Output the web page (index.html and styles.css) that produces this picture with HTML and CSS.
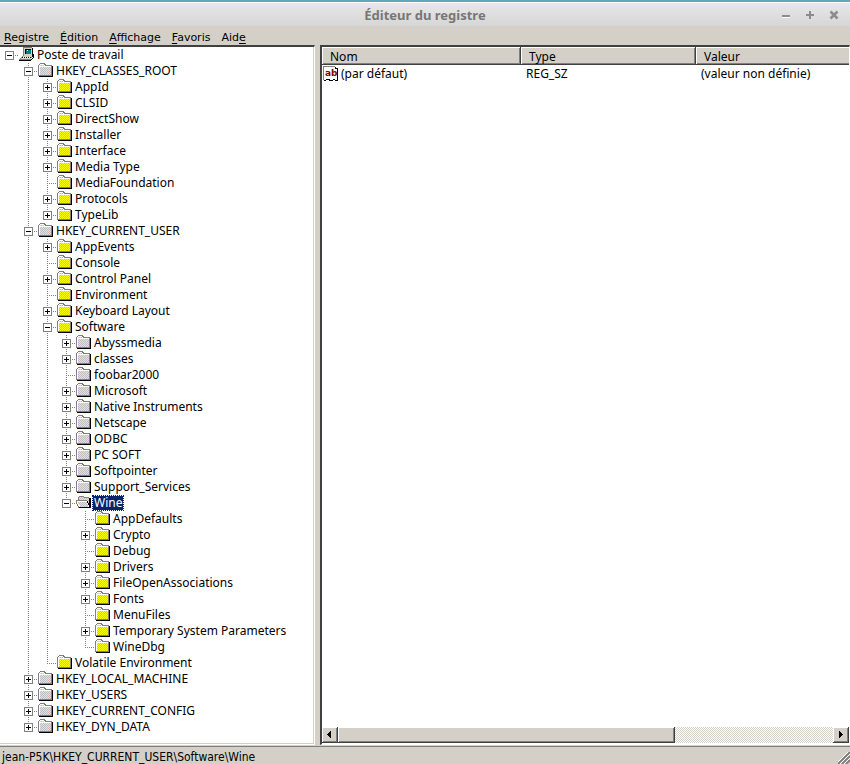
FILE: index.html
```html
<!DOCTYPE html>
<html lang="fr">
<head>
<meta charset="utf-8">
<title>Éditeur du registre</title>
<link rel="stylesheet" href="styles.css">
</head>
<body>
<header class="titlebar">
  <h1>Éditeur du registre</h1>
  <div class="controls">
    <button type="button" aria-label="Réduire"><svg width="10" height="10"><path d="M1 7h8v1H1z" fill="#fff"/><path d="M1 5h8v2H1z" fill="#8c8c8c"/></svg></button>
    <button type="button" aria-label="Agrandir"><svg width="10" height="10"><path d="M4 1h2v3h3v2H6v3H4V6H1V4h3z" fill="#8c8c8c"/></svg></button>
    <button type="button" aria-label="Fermer"><svg width="10" height="10"><path d="M1.5 1.5l7 7M8.5 1.5l-7 7" stroke="#8c8c8c" stroke-width="2.5"/></svg></button>
  </div>
</header>
<nav class="menubar">
  <button type="button"><u>R</u>egistre</button>
  <button type="button"><u>É</u>dition</button>
  <button type="button"><u>A</u>ffichage</button>
  <button type="button"><u>F</u>avoris</button>
  <button type="button">Aid<u>e</u></button>
</nav>
<main class="panes">
  <section class="tree-pane"><ul class="tree" id="tree"></ul></section>
  <section class="list-pane">
    <table class="values">
      <colgroup><col class="col-name"><col class="col-type"><col class="col-value"></colgroup>
      <thead><tr><th>Nom</th><th>Type</th><th>Valeur</th></tr></thead>
      <tbody><tr>
        <td><span class="entry"><svg width="16" height="16" shape-rendering="crispEdges"><path d="M1 1h12v1h1v12h-2v-1h-2v1H7v-1H3v1H1z" fill="#fff"/><path d="M0 0h12v1H1v13H0z" fill="#808080"/><path d="M12 1h1v1h2v13h-3v-1h2V3h-2zM1 14h2v-1h4v1h3v-1h2v1h-2v1H6v-1H3v1H1z" fill="#000"/><text x="2" y="10" class="ab">ab</text></svg><span>(par défaut)</span></span></td>
        <td>REG_SZ</td><td>(valeur non définie)</td>
      </tr></tbody>
    </table>
    <div class="scrollbar">
      <button type="button" aria-label="Défiler à gauche"><svg width="8" height="8" shape-rendering="crispEdges"><path d="M5 0v7H4V6H3V5H2V4H1V3h1V2h1V1h1V0z"/></svg></button>
      <div class="track"><div class="thumb"></div></div>
      <button type="button" aria-label="Défiler à droite"><svg width="8" height="8" shape-rendering="crispEdges"><path d="M2 0v7h1V6h1V5h1V4h1V3H5V2H4V1H3V0z"/></svg></button>
    </div>
  </section>
</main>
<footer class="status"><span>jean-P5K\HKEY_CURRENT_USER\Software\Wine</span>
  <svg width="12" height="12"><path d="M0 12L12 0M4 12L12 4M8 12L12 8" stroke="#808080" stroke-width="2"/><path d="M-2 12L12 -2M2 12L12 2M6 12L12 6" stroke="#fff"/></svg>
</footer>
<script src="tree.js"></script>
</body>
</html>
```
FILE: styles.css
```css
* { box-sizing: border-box; }
html, body { height: 100%; margin: 0; }
body {
  display: flex;
  flex-direction: column;
  overflow: hidden;
  background: #d4d0c8;
  color: #000;
  font: 12px/16px "Noto Sans", sans-serif;
}
button { margin: 0; padding: 0; border: 0; background: none; color: inherit; font: inherit; }
svg { display: block; flex: none; }

.titlebar {
  display: grid;
  grid-template-columns: 1fr auto 1fr;
  align-items: center;
  height: 26px;
  flex: none;
  padding-top: 2px;
  border-top: 2px solid #5fa9ba;
  background: linear-gradient(#e8e8e8, #d6d6d6);
  box-shadow: inset 0 1px #fff;
}
.titlebar h1 { grid-column: 2; margin: 0; color: #777; font: bold 13px/20px "Noto Sans", sans-serif; }
.controls { display: flex; justify-content: flex-end; gap: 14px; padding-right: 11px; }

.menubar {
  display: flex;
  align-items: center;
  gap: 11px;
  height: 19px;
  flex: none;
  padding: 4px 4px 0;
  font: 11px/16px "DejaVu Sans", sans-serif;
}
.menubar u { text-underline-offset: 2px; }

.panes { display: grid; grid-template-columns: 315px 1fr; gap: 5px; flex: 1; min-height: 0; }
.tree-pane, .list-pane {
  min-width: 0;
  background: #fff;
  border-style: solid;
  border-width: 2px 1px 1px;
  border-color: #404040 #fff #fff;
}
.tree-pane { border-left: 0; box-shadow: inset -1px -1px #d4d0c8; }
.list-pane { display: flex; flex-direction: column; justify-content: space-between; padding-bottom: 1px; border-left: 2px solid #404040; }

.tree { margin: 0; padding: 0; list-style: none; }
.tree ul { margin: 0; padding: 0 0 0 19px; list-style: none; }
.tree ul > li {
  background: repeating-linear-gradient(#808080 0 1px, transparent 1px 2px) 9px 0 / 1px 100% no-repeat;
}
.tree ul > li:last-child { background-size: 1px 8px; }
.row {
  display: flex;
  align-items: center;
  height: 16px;
  padding-left: 5px;
  background: repeating-linear-gradient(90deg, #808080 0 1px, transparent 1px 2px) 9px 8px / 10px 1px no-repeat;
}
.toggle { width: 9px; height: 9px; flex: none; margin: 1px 5px 0 0; }
.label { height: 14px; margin-left: 1px; padding: 0 1px; line-height: 14px; white-space: nowrap; }
.label.selected { background: #0a246a; color: #fff; outline: 1px dotted #0a246a; }

.values { width: 100%; border-collapse: collapse; table-layout: fixed; }
.col-name { width: 199px; }
.col-type { width: 175px; }
.values th {
  height: 18px;
  padding: 1px 8px 0;
  background: #d4d0c8;
  box-shadow: inset -1px -1px #404040, inset 1px 1px #fff, inset -2px -2px #808080;
  font-weight: normal;
  text-align: left;
}
.values th:last-child { box-shadow: inset 0 -1px #404040, inset 1px 1px #fff, inset 0 -2px #808080; }
.values td { height: 17px; padding: 1px 5px 0; line-height: 16px; }
.values td:first-child { padding-left: 1px; }
.entry { display: flex; gap: 2px; }
.ab { fill: #800000; font: bold 9px "DejaVu Sans", sans-serif; }

.scrollbar { display: flex; height: 16px; }
.scrollbar button, .thumb {
  background: #d4d0c8;
  box-shadow: inset -1px -1px #404040, inset 1px 1px #fff, inset -2px -2px #808080;
}
.scrollbar button { display: grid; place-items: center; width: 16px; }
.track { flex: 1; background: repeating-conic-gradient(#d4d0c8 0 25%, #fff 0 50%) 0 0 / 2px 2px; }
.thumb { width: 68%; height: 16px; }

.status {
  display: flex;
  justify-content: space-between;
  align-items: flex-end;
  height: 18px;
  flex: none;
  margin-top: 1px;
  padding-left: 2px;
  border-top: 1px solid #808080;
  font: 12px/14px "DejaVu Sans Condensed", "DejaVu Sans", sans-serif;
}
```
FILE: tree.js
```js
// Nodes: [name, state, children]; state is "+" (collapsed), "-" (expanded) or "" (leaf).
const data = ["Poste de travail", "-", [
  ["HKEY_CLASSES_ROOT", "-", [
    ["AppId", "+"], ["CLSID", "+"], ["DirectShow", "+"], ["Installer", "+"], ["Interface", "+"],
    ["Media Type", "+"], ["MediaFoundation", ""], ["Protocols", "+"], ["TypeLib", "+"]]],
  ["HKEY_CURRENT_USER", "-", [
    ["AppEvents", "+"], ["Console", ""], ["Control Panel", "+"], ["Environment", ""], ["Keyboard Layout", "+"],
    ["Software", "-", [
      ["Abyssmedia", "+"], ["classes", "+"], ["foobar2000", ""], ["Microsoft", "+"], ["Native Instruments", "+"],
      ["Netscape", "+"], ["ODBC", "+"], ["PC SOFT", "+"], ["Softpointer", "+"], ["Support_Services", "+"],
      ["Wine", "-", [
        ["AppDefaults", ""], ["Crypto", "+"], ["Debug", ""], ["Drivers", "+"], ["FileOpenAssociations", "+"],
        ["Fonts", "+"], ["MenuFiles", ""], ["Temporary System Parameters", "+"], ["WineDbg", ""]]]]],
    ["Volatile Environment", ""]]],
  ["HKEY_LOCAL_MACHINE", "+"], ["HKEY_USERS", "+"], ["HKEY_CURRENT_CONFIG", "+"], ["HKEY_DYN_DATA", "+"]]];

const svg = (body) => `<svg width="16" height="16" shape-rendering="crispEdges">${body}</svg>`;
const dither = `<defs><pattern id="dither" width="2" height="2" patternUnits="userSpaceOnUse"><path d="M0 0h2v2H0z" fill="#c0c0c0"/><path d="M0 0h1v1H0zM1 1h1v1H1z" fill="#ff0"/></pattern></defs>`;
const icons = {
  folder: svg(`<path d="M1 3h1V2h5v1h1v1h6v8H1z" fill="url(#dither)"/><path d="M0 2h1V1h1V0h5v1h1v1h6v1H7V2H6V1H2v1H1v11H0z" fill="#808080"/><path d="M1 3h12v1H2v8H1zM2 1h4v1h1v1H6V2H2z" fill="#fff"/><path d="M2 4h11v8H2z" fill="url(#dither)"/><path d="M14 3h1v11H1v-1h13z"/><path d="M13 3h1v10H1v-1h12z" fill="#808080"/>`),
  open: svg(`<path d="M3 2h5v1h5v9H3z" fill="url(#dither)"/><path d="M2 2h1V1h5v1h5v1H8V2H3v3H2zM0 5h11v1H1v1H0zM0 7h1v2H0zM1 9h1v2H1zM2 11h1v2H2z" fill="#808080"/><path d="M1 6h10v2h1v2h1v2H3v-1H2V8H1z" fill="#fff"/><path d="M2 7h9v2h1v3H4v-2H3z" fill="url(#dither)"/><path d="M13 3h2v10H3v-1h10v-2h-1V8h-1V6h1v2h1z"/>`),
  computer: svg(`<path d="M5 0h8v1h1v8H4V1h1z" fill="#d4d0c8"/><path d="M4 0h9v1H5v8H4z" fill="#808080"/><path d="M13 1h1v8h-1zM4 9h10v1H4z"/><path d="M6 2h6v5H6z"/><path d="M7 3h5v4H7z" fill="#008080"/><path d="M8 3h1v1H8z" fill="#fff"/><path d="M3 9h10v1H3zM2 11h10v1H2z" fill="#d4d0c8"/><path d="M14 7h1v4h-1v1h-1v1h-1v1H0v-1h12v-1h1v-1h1zM3 10h1v1H3zM5 10h1v1H5zM7 10h1v1H7zM9 10h1v1H9zM11 10h1v1h-1z"/><path d="M3 9h1v1H3zM2 10h1v1H2zM1 11h1v1H1zM0 12h12v1H0zM12 10h1v1h-1z" fill="#808080"/>`)
};
const box = (state) => `<svg width="9" height="9" shape-rendering="crispEdges"><path d="M0 0h9v9H0z" fill="#808080"/><path d="M1 1h7v7H1z" fill="#fff"/><path d="M2 4h5v1H2z"/>${state === "+" ? '<path d="M4 2h1v5H4z"/>' : ""}</svg>`;

function node([name, state, children], root) {
  const icon = root ? "computer" : name === "Wine" ? "open" : "folder";
  const toggle = state ? `<button type="button" class="toggle" aria-label="${name}">${box(state)}</button>` : '<span class="toggle"></span>';
  const kids = children ? `<ul>${children.map((c) => node(c)).join("")}</ul>` : "";
  return `<li><div class="row">${toggle}${icons[icon]}<span class="label${name === "Wine" ? " selected" : ""}">${name}</span></div>${kids}</li>`;
}
document.getElementById("tree").innerHTML = node(data, true);
document.querySelector(".row svg").insertAdjacentHTML("afterbegin", dither);
```
